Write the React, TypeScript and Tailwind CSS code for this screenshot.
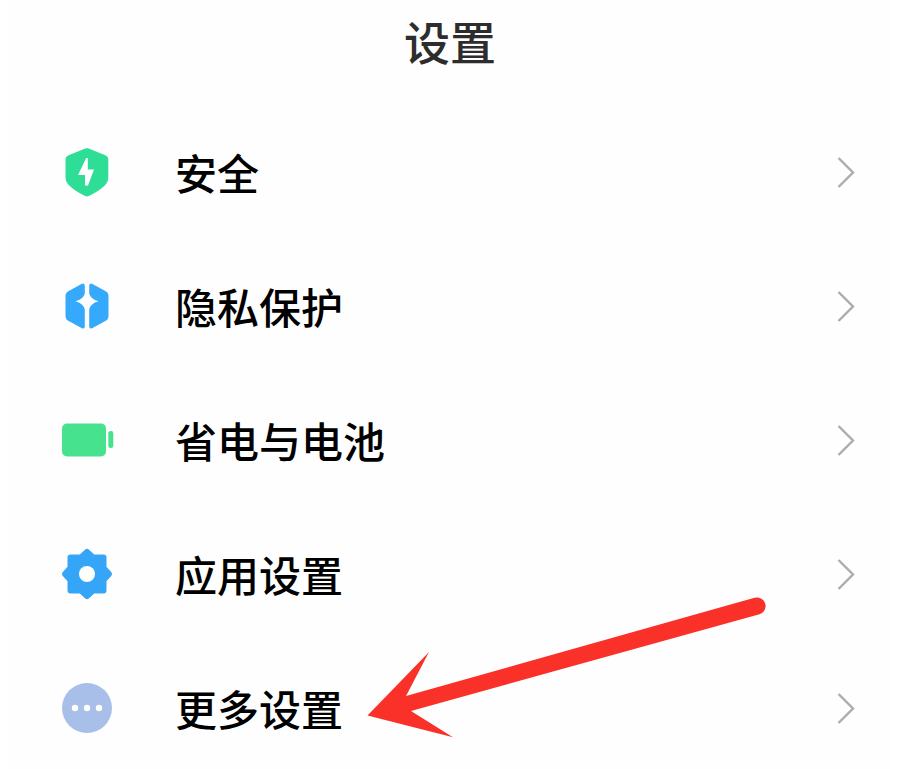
import type { ReactNode } from 'react'

interface SettingItem {
  id: string
  label: string
  icon: ReactNode
}

const items: SettingItem[] = [
  {
    id: 'security',
    label: '安全',
    icon: (
      <>
        <path
          d="M26.200 4.600Q28 3.900 29.800 4.600L46.800 11.600Q49.300 12.700 49.300 15.200V33Q49.300 38.500 45 42.300Q39 47.800 29.800 52Q28 52.800 26.200 52Q17 47.800 11 42.300Q6.500 38.500 6.500 33V15.200Q6.500 12.700 9 11.600Z"
          fill="#2ede96"
        />
        <path d="M27.200 14L19 31H26V41.500H29L35 25.500H28.800V14Z" fill="#fff" />
      </>
    ),
  },
  {
    id: 'privacy',
    label: '隐私保护',
    icon: (
      <g fill="#35a9fb">
        <path d="M25.800 8Q25.800 4.300 22.500 6L8.800 13.600Q6.500 15 6.500 17.500V38.500Q6.500 41 8.800 42.400L22.500 50Q25.800 51.700 25.800 48V31.500Q24.500 25.500 16.500 23.300Q24.500 21 25.800 15.500Z" />
        <path d="M30.200 8Q30.200 4.300 33.500 6L47.200 13.600Q49.500 15 49.500 17.500V38.500Q49.500 41 47.200 42.400L33.500 50Q30.200 51.700 30.200 48V31.500Q31.500 25.500 39.500 23.300Q31.500 21 30.200 15.500Z" />
      </g>
    ),
  },
  {
    id: 'battery',
    label: '省电与电池',
    icon: (
      <g fill="#46e28e">
        <rect x="3" y="11.500" width="44" height="33" rx="5" />
        <rect x="49.300" y="19" width="5" height="17" rx="2.300" />
      </g>
    ),
  },
  {
    id: 'apps',
    label: '应用设置',
    icon: (
      <>
        <path
          d="M28 6L34 11.500H44.500V22L50 28L44.500 34V44.500H34L28 50L22 44.500H11.500V34L6 28L11.500 22V11.500H22Z"
          fill="#35a5f8"
          stroke="#35a5f8"
          strokeWidth="6"
          strokeLinejoin="round"
        />
        <circle cx="28" cy="28" r="8" fill="#fff" />
      </>
    ),
  },
  {
    id: 'more',
    label: '更多设置',
    icon: (
      <>
        <circle cx="28" cy="28" r="25" fill="#a8bfe9" />
        <g fill="#fff">
          <circle cx="16" cy="28" r="3.200" />
          <circle cx="28" cy="28" r="3.200" />
          <circle cx="40" cy="28" r="3.200" />
        </g>
      </>
    ),
  },
]

function Chevron() {
  return (
    <svg className="h-8 w-5 shrink-0" viewBox="0 0 20 32" fill="none" aria-hidden="true">
      <path d="M2.500 2L17 16.500L2.500 31" stroke="#acacac" strokeWidth="2.400" />
    </svg>
  )
}

// Red pointer that lies over the list and ends at the "more" label
function Pointer() {
  return (
    <svg
      className="pointer-events-none absolute -top-[51px] left-[352px] h-[155px] w-[412px]"
      viewBox="0 0 412 155"
      aria-hidden="true"
    >
      <path
        d="M7.500 125.500L69 62L46 106L394.500 7.800A8.500 8.500 0 0 1 399.500 24.200L51 121L93 147.200Z"
        fill="#f93128"
      />
    </svg>
  )
}

export default function App() {
  return (
    <div className="h-screen overflow-hidden bg-white font-['Noto_Sans_CJK_SC',sans-serif]" lang="zh-CN">
      <main className="mx-2 min-h-full bg-[#fefefe]">
        <header className="flex h-[105px] justify-center pt-1">
          <h1 className="text-[46px] leading-[72px] font-medium text-[#2d2d2d]">设置</h1>
        </header>

        <ul>
          {items.map((item) => (
            <li key={item.id} className="relative">
              <a href={`#${item.id}`} className="flex h-[134px] items-center pr-9 pl-[51px]">
                <svg className="h-14 w-14 shrink-0" viewBox="0 0 56 56" aria-hidden="true">
                  {item.icon}
                </svg>
                <span className="ml-15 flex-1 text-[42px] leading-[60px] font-medium text-black">
                  {item.label}
                </span>
                <Chevron />
              </a>
              {item.id === 'more' && <Pointer />}
            </li>
          ))}
        </ul>
      </main>
    </div>
  )
}
